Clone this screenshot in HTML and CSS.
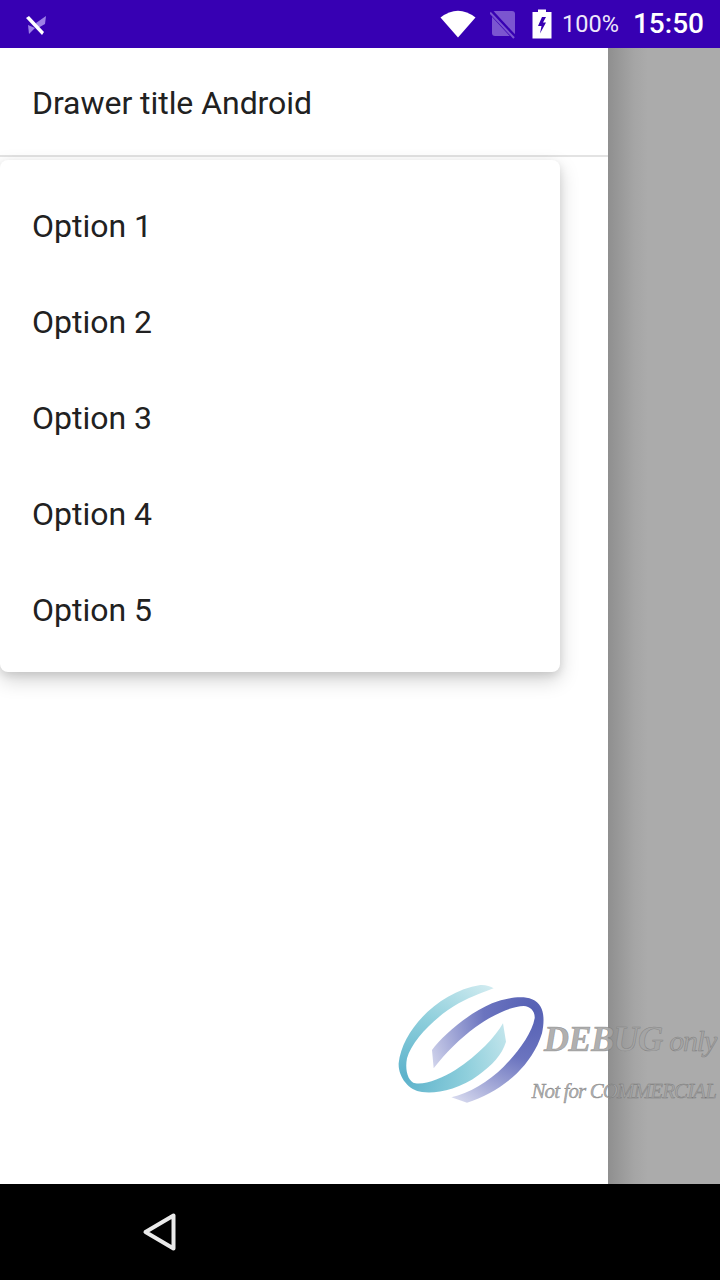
FILE: index.html
```html
<!DOCTYPE html>
<html lang="en">
<head>
<meta charset="utf-8">
<title>Drawer title Android</title>
<link rel="stylesheet" href="styles.css">
</head>
<body>
<div class="screen">
  <header class="status">
    <svg class="app-icon" width="24" height="24" viewBox="0 0 24 24">
      <path class="wing-dim" d="M12 11 22 4 21 12 14 16Z"/>
      <path class="wing-dim" d="M4 13 11 16 5 22Z"/>
      <path class="wing" d="M2 6 5 4 20 20 18 23Z"/>
    </svg>
    <div class="status-right">
      <svg class="wifi" width="36" height="28" viewBox="0 0 36 28"><path d="M18 27.500 .5 7.500Q18-6 35.500 7.500Z"/></svg>
      <svg class="sim" width="28" height="30" viewBox="0 0 28 30">
        <rect class="sim-body" x="2" y="2" width="23" height="25" rx="3"/>
        <path class="sim-gap" d="M0 2 25 29"/>
        <path class="sim-slash" d="M0 3.500 24 29"/>
      </svg>
      <svg class="battery" width="20" height="30" viewBox="0 0 20 30">
        <path d="M6 .5H14V3H19.500V29.500H.5V3H6Z"/>
        <path class="bolt" d="M10 8 6 17H9.500L8 24.500 14 13.500H11L14 8Z"/>
      </svg>
      <span class="pct">100%</span>
      <span class="time">15:50</span>
    </div>
  </header>

  <main class="main">
    <aside class="drawer">
      <div class="drawer-title">Drawer title Android</div>
      <nav class="menu">
        <div class="menu-item">Option 1</div>
        <div class="menu-item">Option 2</div>
        <div class="menu-item">Option 3</div>
        <div class="menu-item">Option 4</div>
        <div class="menu-item">Option 5</div>
      </nav>
    </aside>
    <div class="scrim"></div>

    <div class="watermark">
      <svg class="wm-logo" width="160" height="128" viewBox="0 0 480 384">
        <defs>
          <radialGradient id="teal" gradientUnits="userSpaceOnUse" cx="40" cy="290" r="370">
            <stop offset="0" stop-color="#5cb2cb"/>
            <stop offset=".5" stop-color="#8fcfdc"/>
            <stop offset="1" stop-color="#d0ebf0"/>
          </radialGradient>
          <radialGradient id="blue" gradientUnits="userSpaceOnUse" cx="425" cy="90" r="375">
            <stop offset="0" stop-color="#5560b4"/>
            <stop offset=".4" stop-color="#6b74bf"/>
            <stop offset="1" stop-color="#e0e2f2"/>
          </radialGradient>
        </defs>
        <path fill="url(#teal)" d="M305 25C295 18 280 14 265 15 140 35 30 150 20 250 18 290 50 332 90 336 130 342 200 330 260 285 300 255 330 225 342 185L333 130C310 170 260 225 190 270 150 295 100 315 70 310 48 305 38 270 45 235 60 180 130 110 200 70 240 48 280 35 305 25Z"/>
        <path fill="url(#blue)" d="M120 210C150 170 220 105 300 70 340 55 390 45 420 58 455 72 460 110 450 160 435 210 405 250 375 280 330 322 280 350 225 368L178 352C230 340 290 305 335 260 380 215 420 160 428 115 430 95 415 78 395 78 360 78 300 105 250 142 205 175 160 220 125 265Z"/>
      </svg>
      <div class="wm-text">
        <div class="wm-debug"><b>DEBUG</b> <span class="wm-only">only</span></div>
        <div class="wm-not">Not for COMMERCIAL</div>
      </div>
    </div>
  </main>

  <footer class="navbar">
    <svg class="back" width="36" height="40" viewBox="0 0 36 40"><path d="M31.500 3.500V36.500L3.500 20Z"/></svg>
  </footer>
</div>
</body>
</html>
```

FILE: styles.css
```css
* { box-sizing: border-box; }
html, body { margin: 0; padding: 0; }
body { font-family: Roboto, "Liberation Sans", sans-serif; background: #fff; }

.screen {
  width: 720px;
  height: 1280px;
  display: flex;
  flex-direction: column;
  overflow: hidden;
}

.status {
  height: 48px;
  flex: none;
  background: #3700b3;
  display: flex;
  align-items: center;
  justify-content: space-between;
  padding: 0 16px 0 24px;
  color: #fff;
}
.app-icon { display: block; }
.wing { fill: #fff; }
.wing-dim { fill: #9c7fe6; }
.status-right { display: flex; align-items: center; }
.wifi { display: block; fill: #fff; margin-right: 14px; }
.sim { display: block; margin-right: 14px; }
.sim-body { fill: #7b55d0; }
.sim-gap { stroke: #3700b3; stroke-width: 5; fill: none; }
.sim-slash { stroke: #7b55d0; stroke-width: 2; fill: none; }
.battery { display: block; fill: #fff; margin-right: 10px; }
.bolt { fill: #3700b3; }
.pct { font-size: 23.500px; line-height: 48px; margin-right: 14px; color: #eee8fa; }
.time { font-size: 28px; line-height: 48px; font-weight: 500; }

.main { flex: 1; display: flex; position: relative; min-height: 0; }

.drawer { width: 608px; flex: none; background: #fff; }
.drawer-title {
  height: 109px;
  padding: 1px 0 0 32px;
  font-size: 32px;
  line-height: 108px;
  letter-spacing: -.05px;
  color: #212121;
  border-bottom: 2px solid #e3e3e3;
}
.menu {
  width: 560px;
  margin-top: 3px;
  padding: 16px 0;
  background: #fff;
  border-radius: 8px;
  box-shadow: 0 8px 20px rgba(0, 0, 0, .18), 0 3px 8px rgba(0, 0, 0, .1);
}
.menu-item {
  height: 96px;
  line-height: 100px;
  padding-left: 32px;
  font-size: 32px;
  color: #212121;
}

.scrim {
  flex: 1;
  background: linear-gradient(90deg, #8f8f8f 0, #a5a5a5 26px, #ababab 40px, #ababab 100%);
}

.watermark {
  position: absolute;
  left: 392px;
  top: 932px;
  width: 328px;
  height: 128px;
}
.wm-logo { position: absolute; left: 0; top: 0; }
.wm-text {
  position: absolute;
  right: 4px;
  top: 40px;
  text-align: right;
  font-family: "Liberation Serif", "Times New Roman", serif;
  font-style: italic;
  white-space: nowrap;
  color: rgba(165, 165, 165, .9);
}
.wm-debug { font-size: 35px; line-height: 40px; word-spacing: -2px; -webkit-text-stroke: .5px rgba(110, 110, 110, .6); }
.wm-debug b { font-weight: 700; letter-spacing: -.8px; }
.wm-only { font-size: 30px; letter-spacing: -1.200px; -webkit-text-stroke: .5px rgba(100, 100, 100, .6); }
.wm-not { font-size: 21px; line-height: 24px; letter-spacing: -.9px; margin-top: 18px; -webkit-text-stroke: .4px rgba(100, 100, 100, .7); }

.navbar {
  height: 96px;
  flex: none;
  background: #000;
  display: flex;
  align-items: center;
  padding-left: 142px;
}
.back {
  display: block;
  fill: none;
  stroke: #eaeaea;
  stroke-width: 4;
  stroke-linejoin: round;
}
```
